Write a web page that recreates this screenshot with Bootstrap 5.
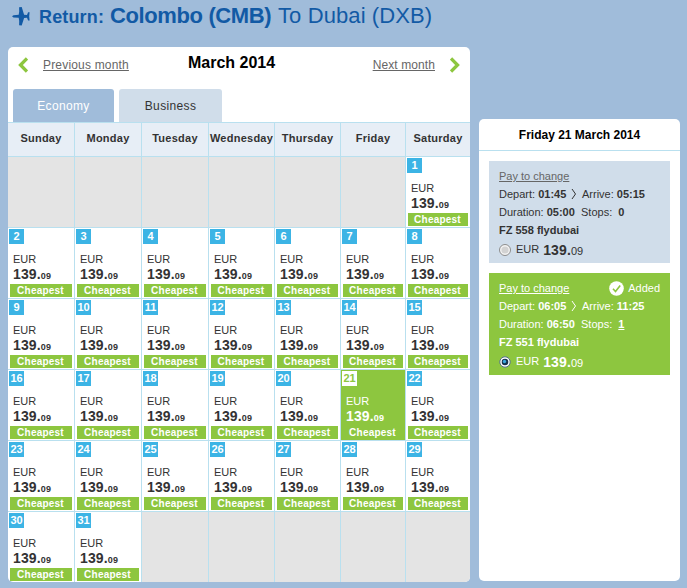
<!DOCTYPE html>
<html lang="en">
<head>
    <meta charset="UTF-8">
    <title>Return flight | Colombo to Dubai</title>
    <link href="https://cdn.jsdelivr.net/npm/bootstrap@5.3.0/dist/css/bootstrap.min.css" rel="stylesheet">
    <style>
        :root {
            --sky: #a0bcda;
            --sky-light: #d0ddea;
            --line: #b9e0ef;
            --lime: #8dc63f;
            --badge: #3cb4e5;
        }

        body {
            background-color: var(--sky);
            color: #333;
            font-family: "Liberation Sans", Arial, sans-serif;
            font-size: 11px;
            line-height: 1;
            height: 588px;
            overflow: hidden;
        }

        .route { height: 47px; padding: 4px 0 0 12px; color: #125aa5; font-size: 22px; line-height: 24px; }
        .route svg { margin: 3px 9px 0 0; }
        .route-label { font-size: 18px; line-height: 26px; letter-spacing: .15px; width: 70px; margin-left: -1px; white-space: nowrap; }
        .route-from { width: 168px; margin-left: 1px; letter-spacing: -.38px; white-space: nowrap; }
        .route-to { letter-spacing: .1px; white-space: nowrap; }

        .calendar { width: 462px; height: 535px; border-radius: 5px; }
        .month-bar { height: 42px; padding: 0 10px 7px; }
        .month-bar a { color: #666; font-size: 12px; letter-spacing: .18px; }
        .month-prev { width: 170px; }
        .month-prev a { margin-left: 15px; }
        .month-next a { margin-right: 15px; letter-spacing: .1px; }
        .month-name { font-size: 16px; color: #000; padding-bottom: 4px; }

        .cabins { height: 33px; padding-left: 5px; gap: 5px; }
        .cabin { height: 33px; border-radius: 3px 3px 0 0; font-size: 12px; letter-spacing: .35px; line-height: 34px; background: var(--sky-light); width: 103px; }
        .cabin.active { background: var(--sky); color: #fff; width: 101px; }

        .days { display: grid; grid-template-columns: 67px 67px 67px 66px 66px 65px 64px; grid-template-rows: 35px repeat(5, 71px) 70px; }
        .days > div { border-right: 1px solid var(--line); border-bottom: 1px solid var(--line); overflow: hidden; }
        .days > div:nth-child(7n) { border-right: 0; }
        .days > div:nth-child(n+43) { border-bottom: 0; }
        .days > .weekday { background: #e7eef6; border-top: 1px solid var(--line); line-height: 31px; letter-spacing: .25px; white-space: nowrap; }
        .blank { background: #e4e4e4; }
        .fare { padding: 1px 2px 0 1px; }
        .fare-date { width: 15px; height: 15px; background: var(--badge); color: #fff; line-height: 15px; }
        .fare-currency { margin: 10px 0 0 4px; line-height: 11px; }
        .fare-amount { margin: 1px 0 0 4px; height: 17px; font-size: 14px; line-height: 17px; letter-spacing: .15px; }
        .fare-amount span { font-size: 9px; line-height: 0; }
        .fare-tag { margin: 1px 0 0 1px; height: 13px; background: var(--lime); color: #fff; font-size: 10px; line-height: 14px; letter-spacing: .22px; padding-right: 1px; }
        .fare.chosen { background: var(--lime); color: #fff; }
        .chosen .fare-date { background: #fff; color: var(--lime); }

        .flights { width: 201px; height: 462px; margin: 72px 0 0 9px; border-radius: 5px; }
        .flights-date { height: 32px; border-bottom: 1px solid var(--line); color: #000; font-size: 12px; line-height: 33px; }
        .flight { width: 181px; height: 102px; margin: 10px 0 0 10px; padding: 6px 10px 0; background: var(--sky-light); white-space: nowrap; }
        .flight > div { height: 18px; line-height: 18px; }
        .flight a { color: #666; }
        .flight.added { background: var(--lime); color: #fff; }
        .flight.added a { color: #fff; }
        .depart { width: 69px; }
        .duration { width: 82px; }
        .flight > .flight-price { height: 22px; line-height: 22px; }
        .flight-currency { line-height: 20px; }
        .flight-total { font-size: 14px; margin-left: 4px; letter-spacing: .1px; }
        .flight-total span { font-size: 11px; }
    </style>
</head>
<body>
    <h1 class="route d-flex fw-normal m-0">
        <svg width="19" height="19" viewBox="0 0 19 19" fill="#125aa5">
            <path d="M0 9.3 1.5 8.2 6.7 7.8 7.2 4.5 7.1.3 9.7 0l2.4 7.7 2.9.2L16.1 5.2h1.5L17.2 9.3l.4 4.1h-1.5L15 10.7l-2.9.2L9.7 18.6l-2.6-.3.1-4.2L6.7 10.8l-5.2-.4z"/>
        </svg>
        <span class="route-label fw-bold">Return:</span>
        <span class="route-from fw-bold">Colombo (CMB)</span>
        <span class="route-to">To Dubai (DXB)</span>
    </h1>

    <div class="d-flex ps-2">
        <!-- Month calendar -->
        <div class="calendar bg-white overflow-hidden">
            <div class="month-bar d-flex align-items-center">
                <div class="month-prev d-flex align-items-center">
                    <svg width="10" height="16" viewBox="0 0 10 16" fill="none" stroke="#8dc63f" stroke-width="3.3"><path d="M9 1.5 2.5 8 9 14.5"/></svg>
                    <a href="#">Previous month</a>
                </div>
                <div class="month-name fw-bold">March 2014</div>
                <div class="month-next d-flex align-items-center ms-auto">
                    <a href="#">Next month</a>
                    <svg width="10" height="16" viewBox="0 0 10 16" fill="none" stroke="#8dc63f" stroke-width="3.3"><path d="M1 1.5 7.5 8 1 14.5"/></svg>
                </div>
            </div>
            <div class="cabins d-flex text-center">
                <div class="cabin active">Economy</div>
                <div class="cabin">Business</div>
            </div>
            <div class="days" id="days"></div>
        </div>

        <!-- Flights of the chosen day -->
        <div class="flights bg-white">
            <div class="flights-date fw-bold text-center">Friday 21 March 2014</div>
            <div class="flight">
                <div><a href="#">Pay to change</a></div>
                <div class="d-flex">
                    <span class="depart">Depart: <b>01:45</b></span>
                    <svg width="14" height="18" viewBox="0 0 14 18" fill="none" stroke="#333"><path d="m4 4 3.5 5L4 14"/></svg>
                    <span>Arrive: <b>05:15</b></span>
                </div>
                <div class="d-flex">
                    <span class="duration">Duration: <b>05:00</b></span>
                    <span>Stops: &nbsp;<b>0</b></span>
                </div>
                <div class="fw-bold">FZ 558 flydubai</div>
                <div class="flight-price d-flex">
                    <svg width="17" height="22" viewBox="0 0 17 22"><circle cx="6" cy="11" r="5.5" fill="#f4f4f4" stroke="#8c8c8c"/><circle cx="6" cy="11" r="3.6" fill="#d2d2d2"/></svg>
                    <span class="flight-currency">EUR</span>
                    <span class="flight-total"><b>139.</b><span>09</span></span>
                </div>
            </div>
            <div class="flight added">
                <div class="d-flex justify-content-between">
                    <a href="#">Pay to change</a>
                    <span class="d-flex align-items-center">
                        <svg class="me-1" width="15" height="15" viewBox="0 0 15 15"><circle cx="7.5" cy="7.5" r="7.3" fill="#fff"/><path d="m4 7.8 2.5 2.7 4.7-6" fill="none" stroke="#8dc63f" stroke-width="1.6"/></svg>
                        Added
                    </span>
                </div>
                <div class="d-flex">
                    <span class="depart">Depart: <b>06:05</b></span>
                    <svg width="14" height="18" viewBox="0 0 14 18" fill="none" stroke="#fff"><path d="m4 4 3.5 5L4 14"/></svg>
                    <span>Arrive: <b>11:25</b></span>
                </div>
                <div class="d-flex">
                    <span class="duration">Duration: <b>06:50</b></span>
                    <span>Stops: &nbsp;<b class="text-decoration-underline">1</b></span>
                </div>
                <div class="fw-bold">FZ 551 flydubai</div>
                <div class="flight-price d-flex">
                    <svg width="17" height="22" viewBox="0 0 17 22"><circle cx="6" cy="11" r="5.2" fill="#fff" stroke="#53708c"/><circle cx="6" cy="11" r="3.3" fill="#14324f"/><circle cx="5.5" cy="10.5" r="1.7" fill="#3ba6dc"/></svg>
                    <span class="flight-currency">EUR</span>
                    <span class="flight-total"><b>139.</b><span>09</span></span>
                </div>
            </div>
        </div>
    </div>

    <script src="https://cdn.jsdelivr.net/npm/bootstrap@5.3.0/dist/js/bootstrap.bundle.min.js"></script>
    <script>
        const WEEKDAYS = ['Sunday', 'Monday', 'Tuesday', 'Wednesday', 'Thursday', 'Friday', 'Saturday'];
        const FIRST_CELL = 6;
        const DAYS_IN_MONTH = 31;
        const CHOSEN_DAY = 21;

        function renderDay(day) {
            if (day < 1 || day > DAYS_IN_MONTH) return '<div class="blank"></div>';
            return `
                <div class="fare ${day === CHOSEN_DAY ? 'chosen' : ''}">
                    <div class="fare-date fw-bold text-center">${day}</div>
                    <div class="fare-currency">EUR</div>
                    <div class="fare-amount fw-bold">139.<span>09</span></div>
                    <div class="fare-tag fw-bold text-center">Cheapest</div>
                </div>`;
        }

        let html = WEEKDAYS.map(name => `<div class="weekday fw-bold text-center">${name}</div>`).join('');
        for (let cell = 0; cell < 42; cell++) {
            html += renderDay(cell - FIRST_CELL + 1);
        }
        document.getElementById('days').innerHTML = html;
    </script>
</body>
</html>
